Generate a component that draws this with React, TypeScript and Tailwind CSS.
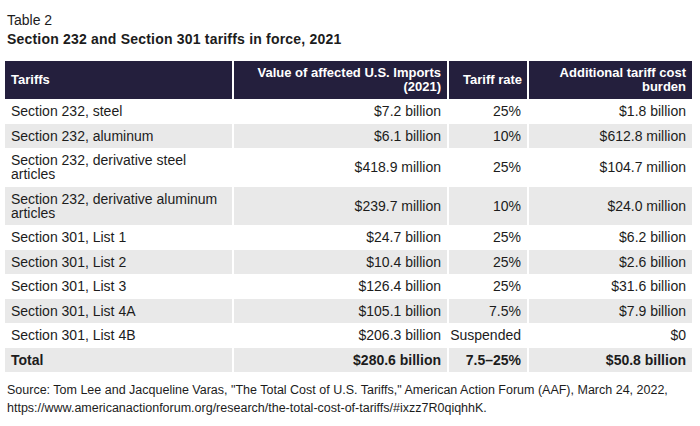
const rows: { name: string; value: string; rate: string; cost: string; gray: boolean }[] = [
  { name: "Section 232, steel", value: "$7.2 billion", rate: "25%", cost: "$1.8 billion", gray: false },
  { name: "Section 232, aluminum", value: "$6.1 billion", rate: "10%", cost: "$612.8 million", gray: true },
  { name: "Section 232, derivative steel articles", value: "$418.9 million", rate: "25%", cost: "$104.7 million", gray: false },
  { name: "Section 232, derivative aluminum articles", value: "$239.7 million", rate: "10%", cost: "$24.0 million", gray: true },
  { name: "Section 301, List 1", value: "$24.7 billion", rate: "25%", cost: "$6.2 billion", gray: false },
  { name: "Section 301, List 2", value: "$10.4 billion", rate: "25%", cost: "$2.6 billion", gray: true },
  { name: "Section 301, List 3", value: "$126.4 billion", rate: "25%", cost: "$31.6 billion", gray: false },
  { name: "Section 301, List 4A", value: "$105.1 billion", rate: "7.5%", cost: "$7.9 billion", gray: true },
  { name: "Section 301, List 4B", value: "$206.3 billion", rate: "Suspended", cost: "$0", gray: false },
]

function Cell({ children, right, gray, bold }: { children: React.ReactNode; right?: boolean; gray?: boolean; bold?: boolean }) {
  return (
    <div
      className={
        (gray ? "bg-[#e9e9e9] " : "bg-white ") +
        (right ? "flex items-center justify-end text-right pr-[6px] " : "flex items-center pl-[6px] pr-[4px] ") +
        (bold ? "font-bold " : "") +
        "py-[5.25px] leading-[14px]"
      }
    >
      <span>{children}</span>
    </div>
  )
}

export default function App() {
  return (
    <div className="w-[700px] h-[426px] bg-white text-[#1c1c1c] font-['Liberation_Sans',Arial,sans-serif] pl-[5px] pt-[11px]">
      <p className="text-[14px] leading-[18px] pl-[2px]">Table 2</p>
      <h1 className="text-[14px] leading-[18px] pl-[2px] font-bold tracking-[0.2px] mt-px">
        Section 232 and Section 301 tariffs in force, 2021
      </h1>

      <div className="mt-[13px] grid grid-cols-[227px_213px_78px_163px] gap-x-[2px] text-[14px] w-[687px]">
        <div className="bg-[#241f3d] text-white font-bold text-[13px] leading-[14px] h-[38px] flex items-center pl-[6px]">
          Tariffs
        </div>
        <div className="bg-[#241f3d] text-white font-bold text-[13px] leading-[14px] h-[38px] flex items-center justify-end text-right pr-[6px]">
          Value of affected U.S. Imports
          <br />
          (2021)
        </div>
        <div className="bg-[#241f3d] text-white font-bold text-[13px] leading-[14px] h-[38px] flex items-center justify-end text-right pr-[5px]">
          Tariff rate
        </div>
        <div className="bg-[#241f3d] text-white font-bold text-[13px] leading-[14px] h-[38px] flex items-center justify-end text-right pr-[6px]">
          Additional tariff cost
          <br />
          burden
        </div>

        {rows.map((r) => (
          <div key={r.name} className="contents">
            <Cell gray={r.gray}>{r.name}</Cell>
            <Cell gray={r.gray} right>{r.value}</Cell>
            <Cell gray={r.gray} right>{r.rate}</Cell>
            <Cell gray={r.gray} right>{r.cost}</Cell>
          </div>
        ))}

        <Cell gray bold>Total</Cell>
        <Cell gray bold right>$280.6 billion</Cell>
        <Cell gray bold right>7.5–25%</Cell>
        <Cell gray bold right>$50.8 billion</Cell>
      </div>

      <p className="mt-[9px] text-[12.5px] leading-[18px] pl-[2px] pr-[20px]">
        Source: Tom Lee and Jacqueline Varas, "The Total Cost of U.S. Tariffs," American Action Forum (AAF), March 24, 2022,
        <br />
        https://www.americanactionforum.org/research/the-total-cost-of-tariffs/#ixzz7R0qiqhhK.
      </p>
    </div>
  )
}
